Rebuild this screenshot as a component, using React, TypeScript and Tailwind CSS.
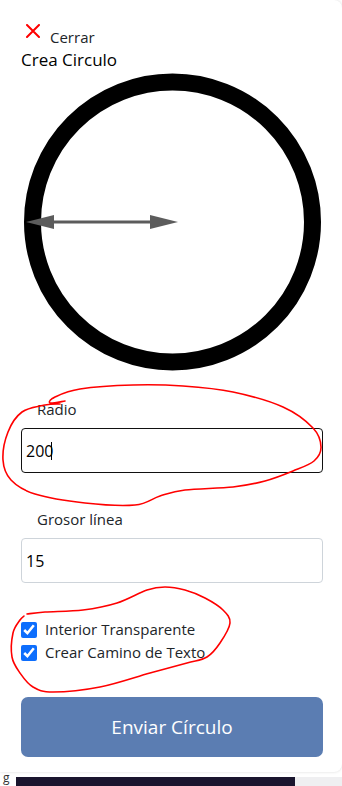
import { useMemo } from "react";

type Pt = [number, number];

// catmull-rom -> cubic bezier, for the hand drawn marks
function smoothPath(pts: Pt[]): string {
  let d = `M${pts[0][0]},${pts[0][1]}`;
  for (let i = 0; i < pts.length - 1; i++) {
    const p0 = pts[i - 1] || pts[i];
    const p1 = pts[i];
    const p2 = pts[i + 1];
    const p3 = pts[i + 2] || p2;
    const c1x = p1[0] + (p2[0] - p0[0]) / 6;
    const c1y = p1[1] + (p2[1] - p0[1]) / 6;
    const c2x = p2[0] - (p3[0] - p1[0]) / 6;
    const c2y = p2[1] - (p3[1] - p1[1]) / 6;
    d += ` C${c1x},${c1y} ${c2x},${c2y} ${p2[0]},${p2[1]}`;
  }
  return d;
}

const radioLoop: Pt[] = [
  [65, 401], [50, 403], [55, 397], [80, 389], [133, 385], [183, 386], [233, 392],
  [283, 407], [313, 428], [321, 447], [314, 461], [293, 471], [265, 481], [233, 487],
  [185, 490], [160, 496], [135, 505], [85, 503], [35, 494], [11, 480], [3, 460],
  [8, 432], [22, 412], [45, 405], [60, 404],
];

const checkLoop: Pt[] = [
  [27, 614], [45, 612], [83, 610], [117, 603], [147, 590], [165, 587], [185, 590],
  [205, 598], [223, 610], [230, 623], [220, 643], [207, 657], [187, 663], [150, 673],
  [100, 687], [53, 692], [33, 687], [20, 673], [12, 657], [13, 633], [20, 620], [24, 616],
];

const font = { fontFamily: '"Open Sans", "Noto Sans", Arial, sans-serif' };

function CirclePreview() {
  return (
    <svg width="302" height="300" viewBox="0 0 302 300" className="block">
      <circle cx="151.5" cy="150" r="140" fill="none" stroke="#000" strokeWidth="17" />
      <line x1="30" y1="150" x2="132" y2="150" stroke="#5c5c5c" strokeWidth="3" />
      <polygon points="5,150 33,143 33,157" fill="#5c5c5c" />
      <polygon points="157,150 129,143 129,157" fill="#5c5c5c" />
    </svg>
  );
}

export default function App() {
  const marks = useMemo(() => [smoothPath(radioLoop), smoothPath(checkLoop)], []);

  return (
    <div className="relative w-[342px] h-[786px] overflow-hidden bg-white text-[#212529]" style={font}>
      <div className="h-[772px] bg-white rounded-r-lg shadow-[0_0_3px_rgba(0,0,0,0.15)] pl-[21px] pr-[19px] pt-[22px]">
        {/* close */}
        <button className="flex items-start text-[15px] leading-[22px] text-[#212529]">
          <svg width="14" height="14" viewBox="0 0 14 14" className="ml-[5px] mt-[2px]">
            <path d="M1 1 L13 13 M13 1 L1 13" stroke="#ff0000" strokeWidth="2" strokeLinecap="round" />
          </svg>
          <span className="ml-[10px] mt-[4px]">Cerrar</span>
        </button>
        <div className="text-[17px] leading-[24px] text-black">Crea Circulo</div>

        <CirclePreview />

        {/* radio */}
        <label className="block mt-[26px] pl-[16px] text-[15px] leading-[22px]">Radio</label>
        <div className="relative mt-[8px]">
          <input
            readOnly
            value="200"
            className="w-full h-[45px] border border-[#111] rounded-[4px] px-[4px] text-[16px] text-black outline-none"
          />
          <span className="absolute left-[30px] top-[14px] w-px h-[18px] bg-black" />
        </div>

        {/* grosor */}
        <label className="block mt-[35px] pl-[16px] text-[15px] leading-[22px]">Grosor línea</label>
        <input
          readOnly
          value="15"
          className="block mt-[8px] w-full h-[45px] border border-[#ced4da] rounded-[4px] px-[4px] text-[16px] text-black outline-none"
        />

        {/* options */}
        <div className="mt-[35px] flex flex-col">
          <label className="flex items-center h-[23px] text-[15px]">
            <input type="checkbox" defaultChecked className="w-4 h-4 m-0 accent-[#0d6efd]" />
            <span className="ml-[8px]">Interior Transparente</span>
          </label>
          <label className="flex items-center h-[23px] text-[15px]">
            <input type="checkbox" defaultChecked className="w-4 h-4 m-0 accent-[#0d6efd]" />
            <span className="ml-[8px]">Crear Camino de Texto</span>
          </label>
        </div>

        <button className="mt-[33px] w-full h-[60px] rounded-[7px] bg-[#5b7db2] text-white text-[19px]">
          Enviar Círculo
        </button>
      </div>

      {/* whatever sits behind the modal */}
      <div className="flex items-end h-[14px]">
        <span className="self-start w-[16px] pl-[3px] text-[12px] leading-[11px] text-[#333]">g</span>
        <div className="w-[279px] h-[9px] bg-[#1a152e]" />
        <div className="flex-1 h-[9px] bg-[#efeff1]" />
      </div>

      <svg className="absolute inset-0 pointer-events-none" width="342" height="786">
        {marks.map((d, i) => (
          <path key={i} d={d} fill="none" stroke="#ff0000" strokeWidth="1.6" strokeLinecap="round" strokeLinejoin="round" />
        ))}
      </svg>
    </div>
  );
}
